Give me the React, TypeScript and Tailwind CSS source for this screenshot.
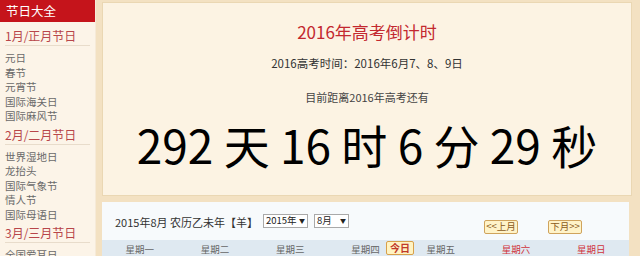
import React from "react";

const font = { fontFamily: '"Noto Sans CJK SC", "Noto Sans", sans-serif' };

function Section({ title, items, first }: { title: string; items: string[]; first?: boolean }) {
  return (
    <div className={first ? "mt-[3px]" : ""}>
      <div className="mx-[5px] h-[21px] pt-[2px] border-b border-[#e8dccb] text-[12px] leading-[18px] text-[#b8464a]">
        {title}
      </div>
      <div className="pt-[5px] px-[5px]">
        {items.map((it) => (
          <div key={it} className="h-[14.5px] text-[10.5px] leading-[14.5px] text-[#6a6a6a]">
            {it}
          </div>
        ))}
      </div>
    </div>
  );
}

export default function App() {
  const week = ["星期一", "星期二", "星期三", "星期四", "星期五", "星期六", "星期日"];
  return (
    <div className="w-[640px] h-[256px] overflow-hidden bg-[#f3e1c2] flex" style={font}>
      {/* Sidebar */}
      <div className="w-[96px] h-full bg-[#fcf4e8] border-r border-[#f6ead8] shrink-0">
        <div className="h-[22px] bg-[#c5141b] text-white text-[12.5px] leading-[22px] pl-[6px]">节日大全</div>
        <Section first title="1月/正月节日" items={["元日", "春节", "元宵节", "国际海关日", "国际麻风节"]} />
        <Section title="2月/二月节日" items={["世界湿地日", "龙抬头", "国际气象节", "情人节", "国际母语日"]} />
        <Section title="3月/三月节日" items={["全国爱耳日"]} />
      </div>

      {/* Main */}
      <div className="ml-[6px] flex flex-col h-full">
        <div className="shrink-0 mt-[2px] w-[530px] h-[194px] bg-[#fcf3e3] border border-[#ead7b3] flex flex-col items-center">
          <div className="mt-[17px] h-[24px] leading-[24px] text-[17px] text-[#c3282f]">2016年高考倒计时</div>
          <div className="mt-[11px] h-[16px] leading-[16px] text-[11.5px] text-[#333]">2016高考时间：2016年6月7、8、9日</div>
          <div className="mt-[18px] h-[16px] leading-[16px] text-[11px] text-[#444]">目前距离2016年高考还有</div>
          <div className="mt-[16px] h-[47px] leading-[47px] text-[46px] text-black whitespace-pre">292 天 16 时 6 分 29 秒</div>
        </div>

        <div className="mt-[6px] w-[527px] flex-1 bg-[#f7fafc] flex flex-col">
          <div className="shrink-0 h-[38px] flex items-start">
            <div className="ml-[13px] mt-[12px] text-[11px] leading-[16px] text-[#333]">2015年8月 农历乙未年【羊】</div>
            <div className="ml-[5px] mt-[12px] w-[45px] h-[14px] bg-white border border-[#a9a9a9] flex items-center justify-between px-[2px] text-[9.5px] leading-none text-[#222]">
              <span>2015年</span>
              <span className="text-[6px]">▼</span>
            </div>
            <div className="ml-[6px] mt-[12px] w-[35px] h-[14px] bg-white border border-[#a9a9a9] flex items-center justify-between px-[2px] text-[9.5px] leading-none text-[#222]">
              <span>8月</span>
              <span className="text-[6px]">▼</span>
            </div>
            <div className="ml-[135px] mt-[18px] w-[34px] h-[14px] bg-[#fff3c8] border border-[#cfa35c] rounded-[2px] flex items-center justify-center text-[9.5px] leading-none text-[#8a5a20]">
              &lt;&lt;上月
            </div>
            <div className="ml-[30px] mt-[18px] w-[34px] h-[14px] bg-[#fff3c8] border border-[#cfa35c] rounded-[2px] flex items-center justify-center text-[9.5px] leading-none text-[#8a5a20]">
              下月&gt;&gt;
            </div>
          </div>
          <div className="shrink-0 relative h-[18px] bg-[#dfe9f1] grid grid-cols-7">
            {week.map((w, i) => (
              <div
                key={w}
                className={"text-center text-[9.5px] leading-[18px] " + (i >= 5 ? "text-[#d0343c]" : "text-[#666]")}
              >
                {w}
              </div>
            ))}
            <div className="absolute left-[284px] top-[1px] w-[28px] h-[14px] bg-[#fff3c2] border border-[#d8a04a] rounded-[2px] flex items-center justify-center text-[10px] font-bold leading-none text-[#c0392b]">
              今日
            </div>
          </div>
        </div>
      </div>
    </div>
  );
}
